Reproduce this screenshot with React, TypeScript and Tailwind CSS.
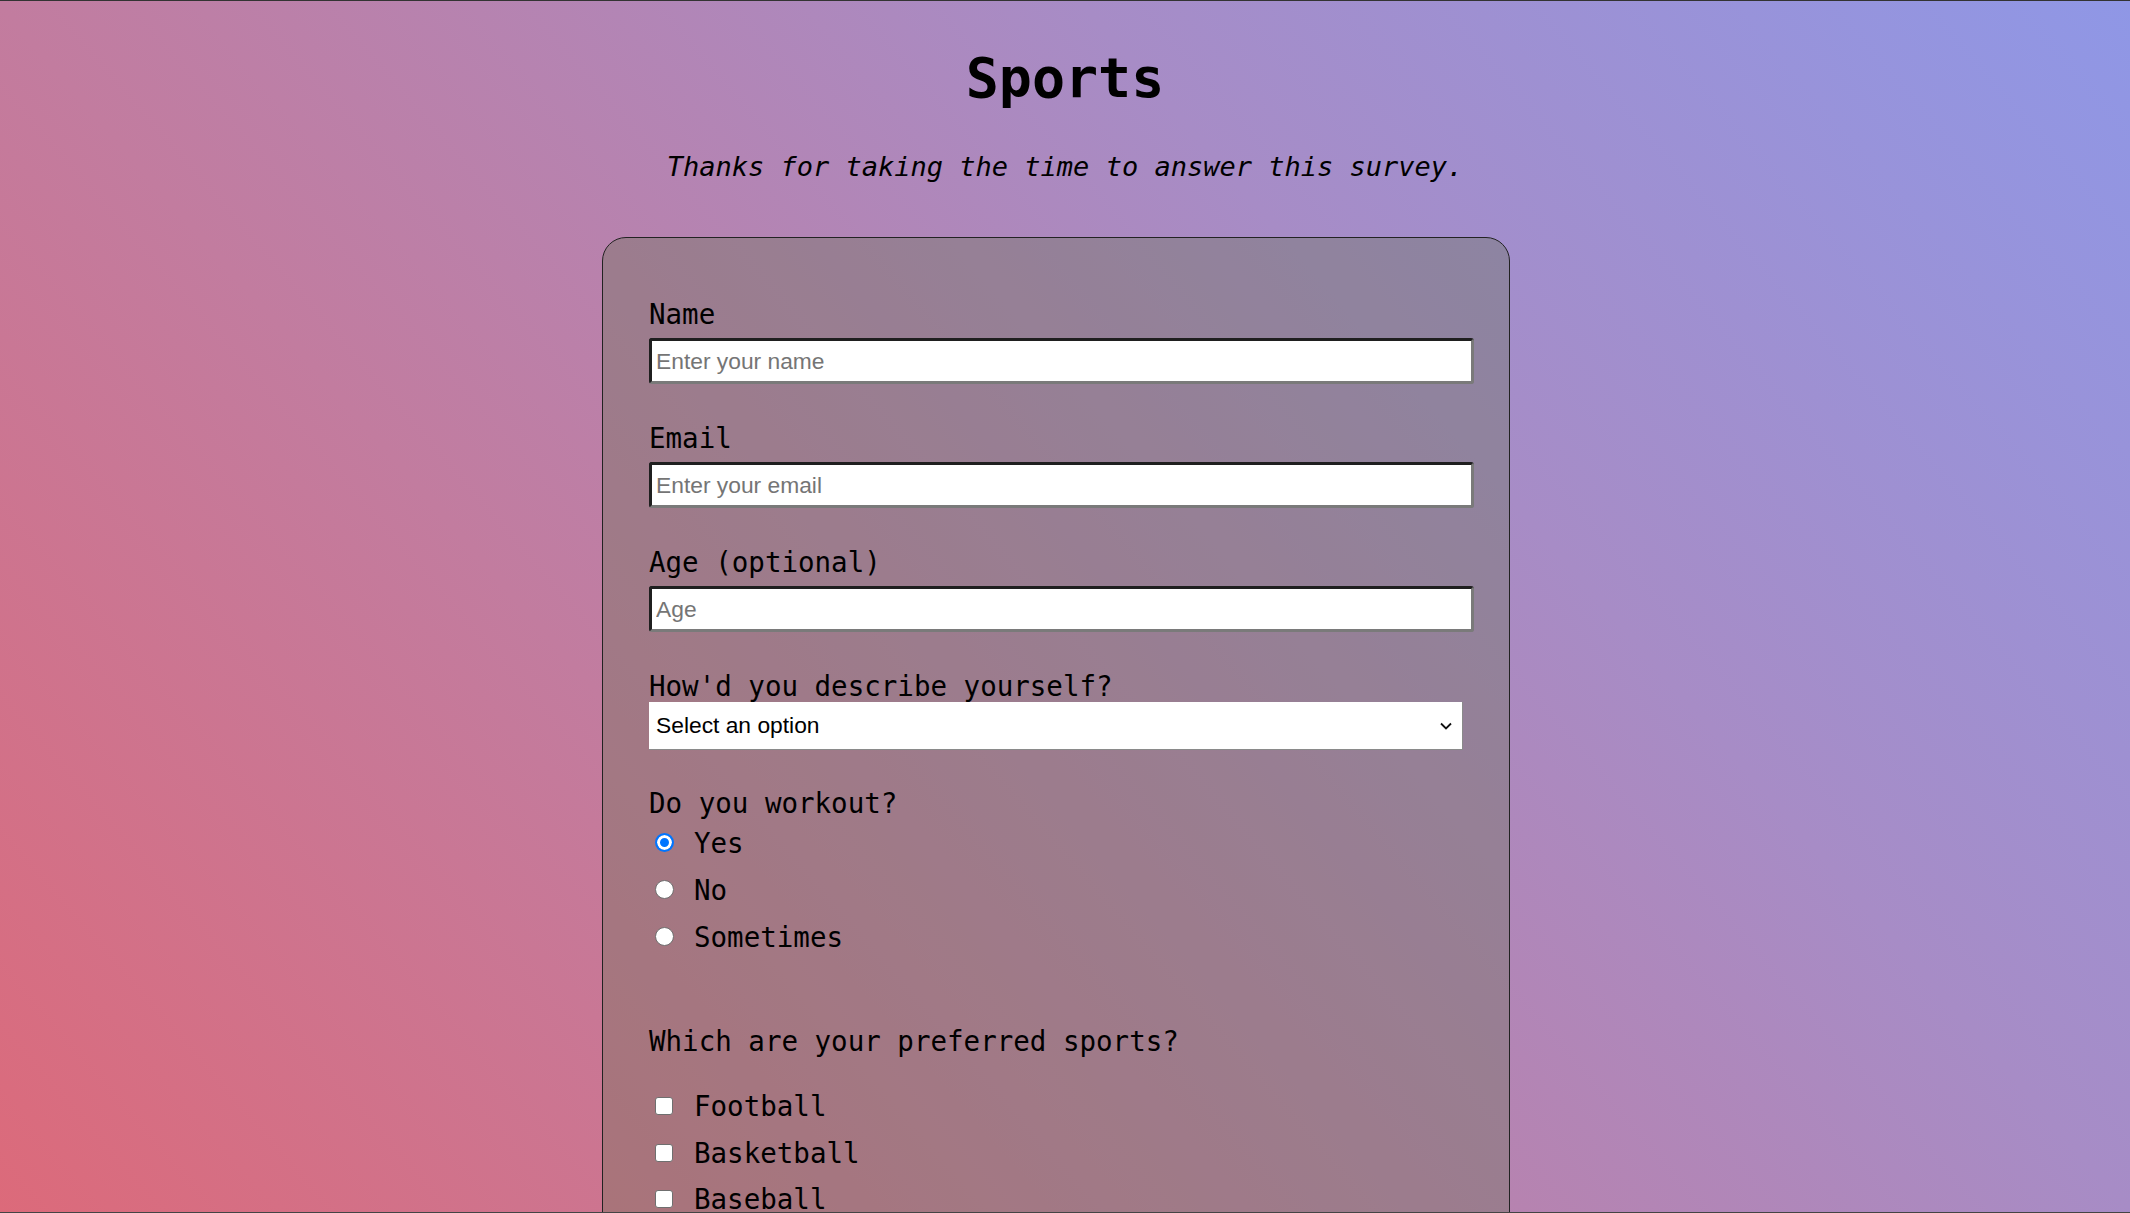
import React from "react";

const inputCls =
  "block w-[825px] h-[46px] mt-[8px] bg-white rounded-[3px] border-[3px] border-t-[#1f1f1f] border-l-[#1f1f1f] border-r-[#7a7a7a] border-b-[#7a7a7a] px-[4px] font-['Liberation_Sans',Arial,sans-serif] text-[22.8px] text-black placeholder:text-[#757575] outline-none";

function Field({ label, placeholder, type, first }: { label: string; placeholder: string; type: string; first?: boolean }) {
  return (
    <div className={first ? "" : "mt-[38px]"}>
      <label className="block text-[27.5px] leading-[32px]">{label}</label>
      <input type={type} placeholder={placeholder} className={inputCls} />
    </div>
  );
}

function Radio({ label, checked }: { label: string; checked?: boolean }) {
  return (
    <label className="flex items-center h-[47px] text-[27.5px] leading-[32px]">
      <input
        type="radio"
        name="workout"
        defaultChecked={checked}
        className="m-0 ml-[6px] w-[19px] h-[19px] shrink-0 appearance-none rounded-full border border-[#6f6f6f] bg-white checked:border-[2.5px] checked:border-[#0075ff] checked:bg-[#0075ff] checked:shadow-[inset_0_0_0_3px_white]"
      />
      <span className="ml-[20px]">{label}</span>
    </label>
  );
}

function Check({ label }: { label: string }) {
  return (
    <label className="flex items-center h-[46.5px] text-[27.5px] leading-[32px]">
      <input
        type="checkbox"
        className="m-0 ml-[6px] w-[18px] h-[18px] shrink-0 appearance-none rounded-[3px] border border-[#6f6f6f] bg-white"
      />
      <span className="ml-[21px]">{label}</span>
    </label>
  );
}

export default function App() {
  return (
    <div className="relative h-[1213px] overflow-hidden bg-[linear-gradient(49deg,#dc6a7a_0%,#c27c9f_33%,#a78cc6_67%,#8f97e6_100%)] font-['DejaVu_Sans_Mono',monospace] text-black">
      <div className="h-px bg-[#333]" />
      <h1 className="pt-[45px] text-center text-[55px] leading-[64px] font-bold">Sports</h1>
      <p className="mt-[41px] text-center italic text-[27px] leading-[32px]">
        Thanks for taking the time to answer this survey.
      </p>
      <form className="mt-[54px] ml-[602px] w-[908px] rounded-[24px] border border-[#222] bg-[rgba(103,115,82,0.35)] pt-[60px] px-[46px] pb-[80px]">
        <Field first label="Name" placeholder="Enter your name" type="text" />
        <Field label="Email" placeholder="Enter your email" type="email" />
        <Field label="Age (optional)" placeholder="Age" type="number" />
        <div className="mt-[38px]">
          <label className="block text-[27.5px] leading-[32px]">How'd you describe yourself?</label>
          <div className="relative">
            <select
              defaultValue=""
              className="block w-full h-[48px] appearance-none bg-white border-r border-b border-[#8a8a8a] pl-[7px] font-['Liberation_Sans',Arial,sans-serif] text-[22.8px] text-black outline-none"
            >
              <option value="" disabled>
                Select an option
              </option>
              <option>Student</option>
              <option>Full time job</option>
              <option>Prefer not to say</option>
            </select>
            <svg
              className="pointer-events-none absolute right-[10px] top-[19px]"
              width="14"
              height="10"
              viewBox="0 0 14 10"
              fill="none"
            >
              <path d="M2 2.5 L7 7.5 L12 2.5" stroke="#111" strokeWidth="1.8" />
            </svg>
          </div>
        </div>
        <div className="mt-[37px]">
          <p className="text-[27.5px] leading-[32px]">Do you workout?</p>
          <Radio label="Yes" checked />
          <Radio label="No" />
          <Radio label="Sometimes" />
        </div>
        <div className="mt-[65px]">
          <p className="text-[27.5px] leading-[32px]">Which are your preferred sports?</p>
          <div className="mt-[26px]">
            <Check label="Football" />
            <Check label="Basketball" />
            <Check label="Baseball" />
            <Check label="Tennis" />
          </div>
        </div>
        <div className="mt-[40px]">
          <p className="text-[27.5px] leading-[32px]">Any comments or suggestions?</p>
          <textarea className="mt-[8px] block w-[825px] h-[120px] bg-white border-[3px] border-[#555]" />
        </div>
      </form>
      <div className="absolute bottom-0 left-0 right-0 h-px bg-[#444]" />
    </div>
  );
}
